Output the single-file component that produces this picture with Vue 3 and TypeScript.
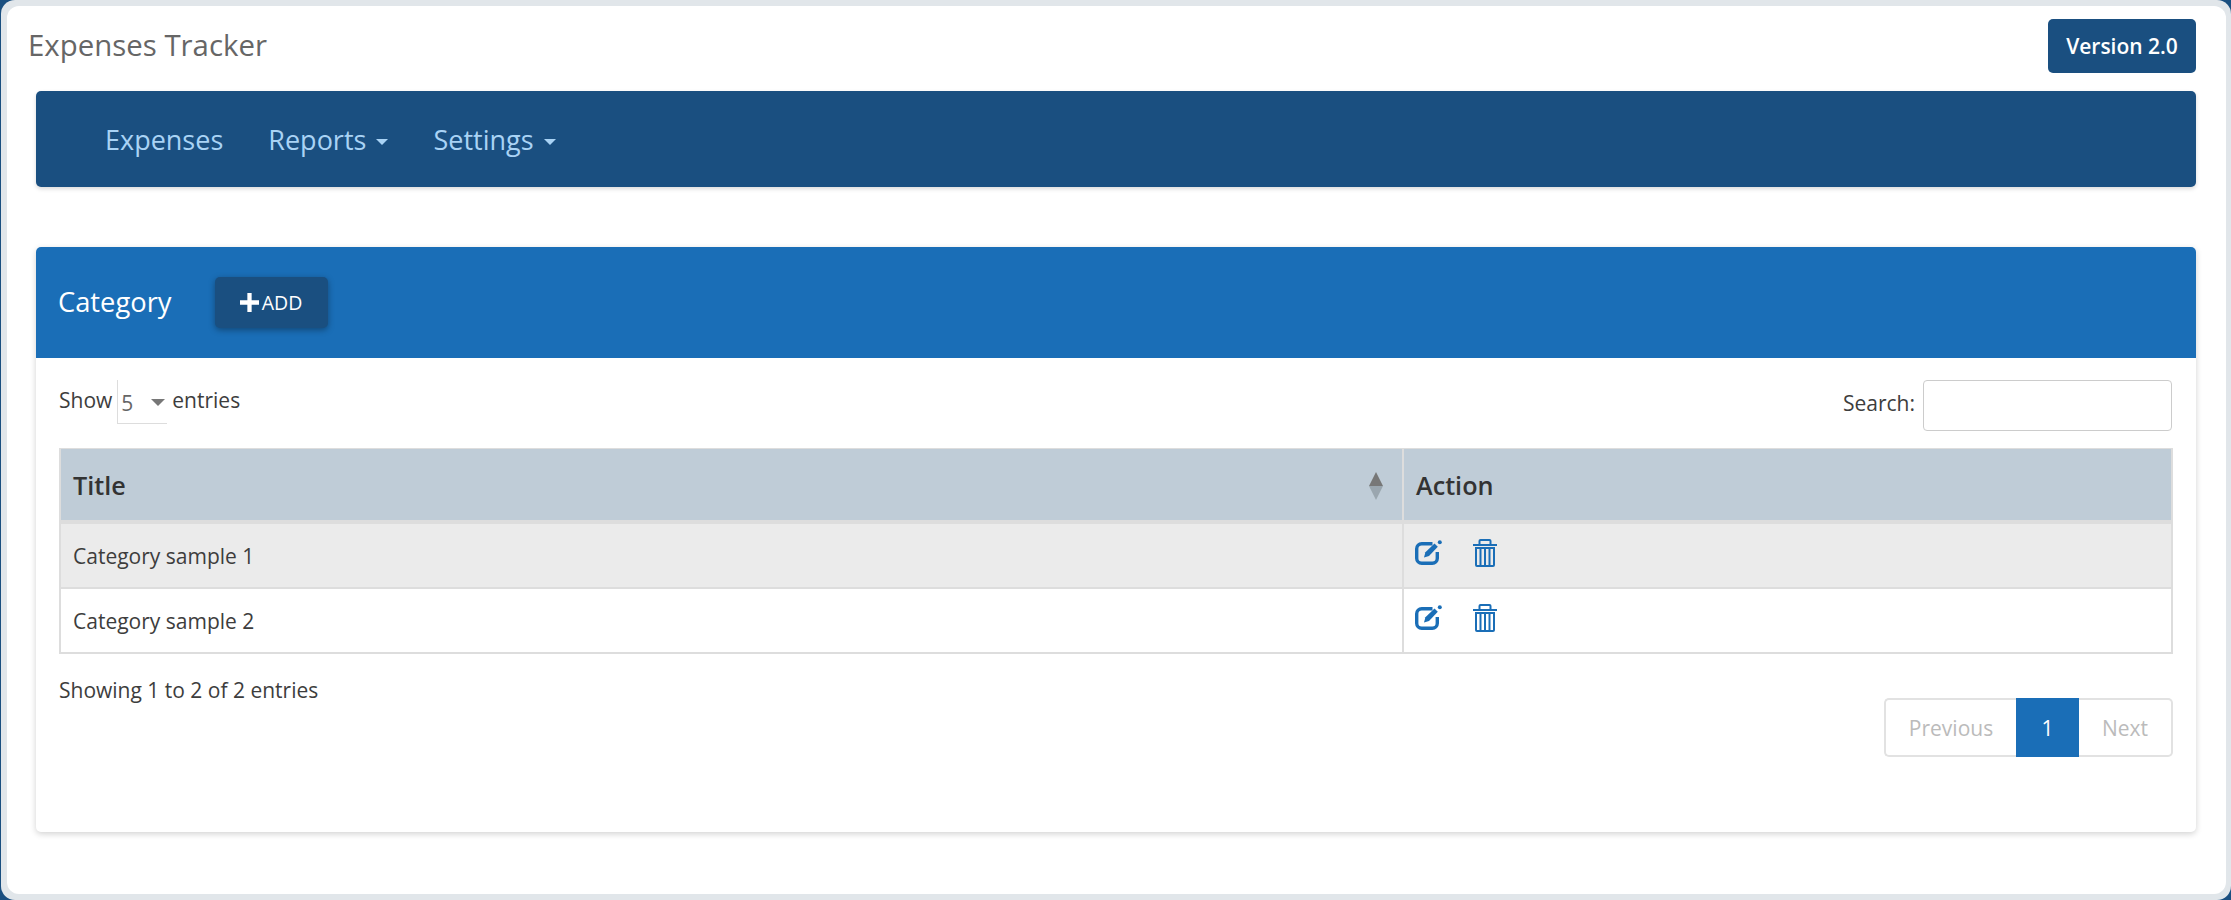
<script setup lang="ts">
const rows: string[] = ['Category sample 1', 'Category sample 2']
</script>

<template>
  <div class="frame">
    <div class="sheet">
      <header class="top">
        <h1 class="brand">Expenses Tracker</h1>
        <button class="version">Version 2.0</button>
      </header>
      <nav class="navbar">
        <a class="link">Expenses</a>
        <a class="link">Reports <i class="caret"></i></a>
        <a class="link">Settings <i class="caret"></i></a>
      </nav>
      <section class="card">
        <div class="card-head">
          <h2 class="card-title">Category</h2>
          <button class="add">
            <svg class="plus" viewBox="0 0 16 16" width="19" height="19"><path d="M6.200 0h3.600v6.200H16v3.600H9.800V16H6.200V9.800H0V6.200h6.200z" fill="#fff" /></svg>
            <span>ADD</span>
          </button>
        </div>
        <div class="card-body">
          <div class="tools">
            <div class="length">
              <span>Show</span>
              <div class="select"><span>5</span><i class="select-caret"></i></div>
              <span>entries</span>
            </div>
            <label class="search">Search:<input class="search-input" type="text" /></label>
          </div>
          <table class="table">
            <thead>
              <tr>
                <th class="col-title">
                  Title
                  <span class="sort"><i class="up"></i><i class="down"></i></span>
                </th>
                <th>Action</th>
              </tr>
            </thead>
            <tbody>
              <tr v-for="(row, i) in rows" :key="row" :class="{ odd: i === 0 }">
                <td class="col-title">{{ row }}</td>
                <td class="actions">
                  <svg class="edit" viewBox="0 0 27 25" width="27" height="25">
                    <path d="M17.500 3.700H6.700A5 5 0 0 0 1.700 8.700V18.300a5 5 0 0 0 5 5h10.600a5 5 0 0 0 5-5V12" fill="none" stroke="#1a6eb7" stroke-width="3.400" />
                    <path d="M9 17.500 10.400 12.300 19.500 3.500 22.800 6.800 14 15.900z" fill="#1a6eb7" />
                    <circle cx="24.800" cy="2.300" r="2" fill="#1a6eb7" />
                  </svg>
                  <svg class="trash" viewBox="0 0 24 28" width="24" height="28">
                    <path d="M0 6h24" stroke="#1a6eb7" stroke-width="2" />
                    <path d="M6.500 5.500V2a1 1 0 0 1 1-1h9a1 1 0 0 1 1 1v3.500" fill="none" stroke="#1a6eb7" stroke-width="2" />
                    <path d="M3 9h18V26a1 1 0 0 1-1 1H4a1 1 0 0 1-1-1z" fill="none" stroke="#1a6eb7" stroke-width="2" />
                    <path d="M7.500 10v16M12 10v16M16.500 10v16" stroke="#1a6eb7" stroke-width="2" />
                  </svg>
                </td>
              </tr>
            </tbody>
          </table>
          <div class="foot">
            <div class="info">Showing 1 to 2 of 2 entries</div>
            <div class="pager">
              <a class="page first">Previous</a>
              <a class="page current">1</a>
              <a class="page last">Next</a>
            </div>
          </div>
        </div>
      </section>
    </div>
  </div>
</template>

<style>
html, body { margin: 0; background: #1a4f80; }
</style>

<style scoped>
* { box-sizing: border-box; }
.frame {
  height: 900px;
  margin-left: 1px;
  padding: 6px 5px 6px 6px;
  background: #e1e6ea;
  border-radius: 14px;
  font-family: "Open Sans", "Liberation Sans", sans-serif;
  font-size: 21px;
  color: #3d3d3d;
}
.sheet {
  height: 100%;
  padding: 0 30px 0 29px;
  background: #fff;
  border-radius: 12px;
}
.top {
  display: flex;
  align-items: flex-start;
  justify-content: space-between;
  height: 85px;
  padding-top: 13px;
  margin-left: -8px;
}
.brand {
  margin: 6px 0 0;
  font-size: 29.400px;
  font-weight: 400;
  line-height: 40px;
  color: #666;
}
.version {
  width: 148px;
  height: 54px;
  border: 0;
  border-radius: 5px;
  background: #1a4f80;
  color: #fff;
  font: 600 21px "Open Sans", sans-serif;
}
.navbar {
  display: flex;
  align-items: center;
  gap: 45px;
  height: 96px;
  padding-left: 69px;
  background: #1a4f80;
  border-radius: 5px;
  box-shadow: 0 2px 4px rgba(0, 0, 0, 0.15);
}
.link {
  color: #a9d3f5;
  font-size: 27px;
}
.caret {
  display: inline-block;
  margin-left: 3px;
  vertical-align: middle;
  border-top: 6px solid #a9d3f5;
  border-left: 6px solid transparent;
  border-right: 6px solid transparent;
}
.card {
  height: 585px;
  margin-top: 60px;
  border-radius: 5px;
  box-shadow: 0 2px 6px rgba(0, 0, 0, 0.18);
}
.card-head {
  display: flex;
  align-items: center;
  gap: 43px;
  height: 111px;
  padding-left: 22px;
  background: #1a6eb7;
  border-radius: 5px 5px 0 0;
}
.card-title {
  margin: 0 0 2px;
  color: #fff;
  font-size: 27.300px;
  font-weight: 400;
}
.add {
  display: flex;
  align-items: center;
  justify-content: center;
  gap: 3px;
  width: 113px;
  height: 51px;
  border: 0;
  border-radius: 5px;
  background: #1a4f80;
  box-shadow: 0 2px 6px rgba(0, 0, 0, 0.35);
  color: #fff;
  font: 400 19.500px "Open Sans", sans-serif;
}
.plus { flex: none; }
.card-body { padding: 22px 23px 0; }
.tools {
  display: flex;
  justify-content: space-between;
  height: 68px;
}
.length {
  display: flex;
  align-items: flex-start;
  gap: 5px;
  line-height: 40px;
}
.select {
  position: relative;
  width: 50px;
  height: 44px;
  padding-left: 3px;
  border-left: 1px solid #ddd;
  border-bottom: 1px solid #ddd;
  color: #666;
  line-height: 46px;
}
.select-caret {
  position: absolute;
  top: 19px;
  right: 2px;
  border-top: 7px solid #777;
  border-left: 7px solid transparent;
  border-right: 7px solid transparent;
}
.search {
  display: flex;
  align-items: flex-start;
  gap: 8px;
  line-height: 46px;
}
.search-input {
  width: 249px;
  height: 51px;
  margin-right: 1px;
  border: 1px solid #ccc;
  border-radius: 4px;
}
.table {
  width: 100%;
  border-collapse: separate;
  border-spacing: 0;
  border: 2px solid #ddd;
  border-top-width: 1px;
}
.table th {
  position: relative;
  height: 75px;
  padding: 0 12px;
  background: #bfccd7;
  border-bottom: 4px solid #ddd;
  color: #333;
  font-size: 25.200px;
  font-weight: 600;
  text-align: left;
}
.table td {
  height: 65px;
  padding: 0 12px;
  border-top: 2px solid #ddd;
}
.table tbody tr:first-child td { border-top: 0; height: 63px; }
.table .col-title { width: 1343px; border-right: 2px solid #ddd; }
.odd { background: #ebebeb; }
.sort {
  position: absolute;
  top: 23px;
  right: 19px;
  display: flex;
  flex-direction: column;
}
.up {
  border-bottom: 14px solid #777;
  border-left: 7px solid transparent;
  border-right: 7px solid transparent;
}
.down {
  border-top: 14px solid #9aa6af;
  border-left: 7px solid transparent;
  border-right: 7px solid transparent;
}
.actions svg { display: inline-block; vertical-align: middle; }
.table .actions { padding: 0 12px 8px 11px; }
.trash { margin-left: 31px; }
.foot {
  display: flex;
  justify-content: space-between;
  align-items: flex-start;
}
.info { margin-top: 19px; line-height: 34px; }
.pager {
  display: flex;
  margin-top: 44px;
  height: 59px;
  color: #bbb;
}
.page {
  display: flex;
  align-items: center;
  justify-content: center;
  border: 2px solid #e2e2e2;
  border-left: 0;
  border-right: 0;
}
.first { width: 132px; border-left: 2px solid #e2e2e2; border-radius: 5px 0 0 5px; }
.current { width: 63px; background: #1a6eb7; border: 0; color: #fff; }
.last { width: 94px; border-right: 2px solid #e2e2e2; border-radius: 0 5px 5px 0; }
</style>
